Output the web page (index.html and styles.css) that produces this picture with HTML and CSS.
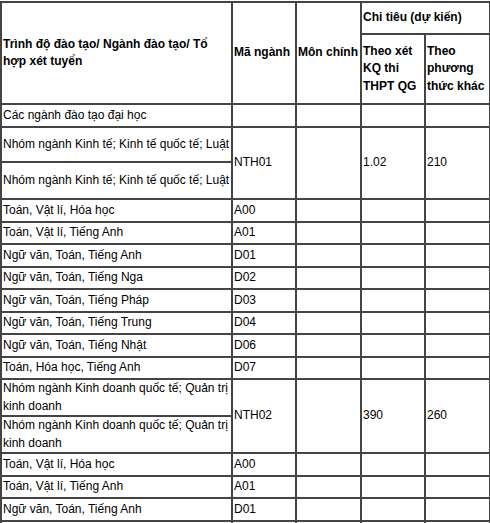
FILE: index.html
```html
<!DOCTYPE html>
<html lang="vi">
<head>
<meta charset="utf-8">
<link rel="stylesheet" href="styles.css">
</head>
<body>
<table class="grid">
  <colgroup>
    <col class="c-name">
    <col class="c-code">
    <col class="c-subj">
    <col class="c-q1">
    <col class="c-q2">
  </colgroup>
  <tr class="h1">
    <th rowspan="2">Trình độ đào tạo/ Ngành đào tạo/ Tổ hợp xét tuyển</th>
    <th rowspan="2">Mã ngành</th>
    <th rowspan="2">Môn chính</th>
    <th colspan="2">Chi tiêu (dự kiến)</th>
  </tr>
  <tr class="h2">
    <th>Theo xét KQ thi THPT QG</th>
    <th>Theo phương thức khác</th>
  </tr>
  <tr><td>Các ngành đào tạo đại học</td><td></td><td></td><td></td><td></td></tr>
  <tr class="tall"><td>Nhóm ngành Kinh tế; Kinh tế quốc tế; Luật</td><td rowspan="2">NTH01</td><td rowspan="2"></td><td rowspan="2">1.02</td><td rowspan="2">210</td></tr>
  <tr class="tall2"><td>Nhóm ngành Kinh tế; Kinh tế quốc tế; Luật</td></tr>
  <tr><td>Toán, Vật lí, Hóa học</td><td>A00</td><td></td><td></td><td></td></tr>
  <tr><td>Toán, Vật lí, Tiếng Anh</td><td>A01</td><td></td><td></td><td></td></tr>
  <tr><td>Ngữ văn, Toán, Tiếng Anh</td><td>D01</td><td></td><td></td><td></td></tr>
  <tr><td>Ngữ văn, Toán, Tiếng Nga</td><td>D02</td><td></td><td></td><td></td></tr>
  <tr><td>Ngữ văn, Toán, Tiếng Pháp</td><td>D03</td><td></td><td></td><td></td></tr>
  <tr><td>Ngữ văn, Toán, Tiếng Trung</td><td>D04</td><td></td><td></td><td></td></tr>
  <tr><td>Ngữ văn, Toán, Tiếng Nhật</td><td>D06</td><td></td><td></td><td></td></tr>
  <tr><td>Toán, Hóa học, Tiếng Anh</td><td>D07</td><td></td><td></td><td></td></tr>
  <tr class="tall"><td>Nhóm ngành Kinh doanh quốc tế; Quản trị kinh doanh</td><td rowspan="2">NTH02</td><td rowspan="2"></td><td rowspan="2">390</td><td rowspan="2">260</td></tr>
  <tr class="tall2"><td>Nhóm ngành Kinh doanh quốc tế; Quản trị kinh doanh</td></tr>
  <tr><td>Toán, Vật lí, Hóa học</td><td>A00</td><td></td><td></td><td></td></tr>
  <tr><td>Toán, Vật lí, Tiếng Anh</td><td>A01</td><td></td><td></td><td></td></tr>
  <tr><td>Ngữ văn, Toán, Tiếng Anh</td><td>D01</td><td></td><td></td><td></td></tr>
  <tr><td></td><td></td><td></td><td></td><td></td></tr>
</table>
</body>
</html>
```
FILE: styles.css
```css
html, body {
  margin: 0;
  padding: 0;
  background: #fff;
}
.grid {
  border-collapse: collapse;
  table-layout: fixed;
  width: 489px;
  margin-top: 1px;
  font-family: "Liberation Sans", Arial, sans-serif;
  font-size: 12px;
  color: #000;
}
.c-name { width: 231px; }
.c-code { width: 64px; }
.c-subj { width: 65px; }
.c-q1 { width: 64px; }
.c-q2 { width: 65px; }
.grid th,
.grid td {
  border: 2px solid #444;
  padding: 0 1px;
  text-align: left;
  vertical-align: middle;
  line-height: 17.5px;
}
.grid th {
  font-weight: bold;
}
.grid tr {
  height: 22.5px;
}
.grid tr.h1 { height: 32px; }
.grid tr.h2 { height: 70px; }
.grid tr.tall { height: 35.5px; }
.grid tr.tall2 { height: 37px; }
```
